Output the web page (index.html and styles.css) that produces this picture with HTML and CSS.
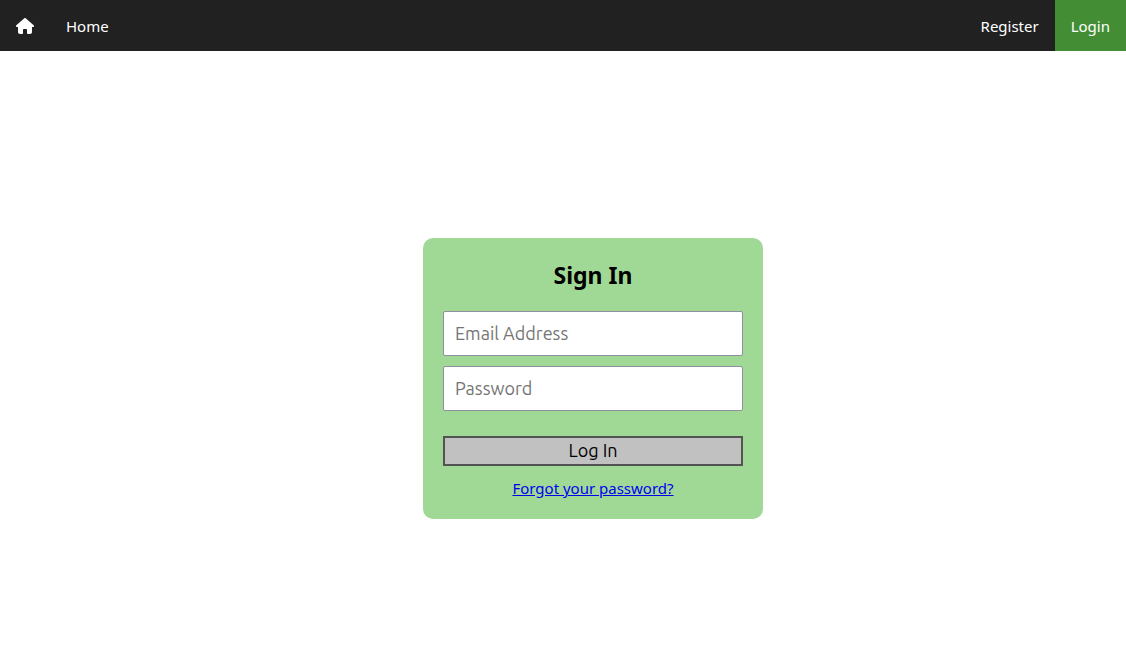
FILE: index.html
```html
<!DOCTYPE html>
<html lang="en">
<head>
<meta charset="utf-8">
<meta name="viewport" content="width=device-width, initial-scale=1">
<title>Sign In</title>
<link rel="stylesheet" href="styles.css">
</head>
<body>
<nav class="navbar">
  <a class="nav-link" href="#" aria-label="Start page"><svg class="home-icon" viewBox="0 0 576 512" aria-hidden="true"><path fill="currentColor" d="M576 256c0 18-15 32-32 32h-32l1 160c0 36-28 64-64 64h-65c-18 0-32-14-32-32v-96c0-18-14-32-32-32h-64c-18 0-32 14-32 32v96c0 18-14 32-32 32h-64c-35 0-64-28-64-64V288H32c-18 0-32-14-32-32 0-9 3-17 10-24L266 8c7-7 15-8 22-8s15 2 21 7l256 225c8 7 12 15 11 24z"/></svg></a>
  <a class="nav-link nav-text" href="#">Home</a>
  <a class="nav-link nav-text nav-end" href="#">Register</a>
  <a class="nav-link nav-text active" href="#" aria-current="page">Login</a>
</nav>
<main class="page">
  <form class="card">
    <h1 class="title">Sign In</h1>
    <input class="field" type="email" placeholder="Email Address" aria-label="Email Address">
    <input class="field" type="password" placeholder="Password" aria-label="Password">
    <button class="submit" type="button">Log In</button>
    <a class="forgot" href="#">Forgot your password?</a>
  </form>
</main>
</body>
</html>
```

FILE: styles.css
```css
* {
  box-sizing: border-box;
}

body {
  display: flex;
  flex-direction: column;
  min-height: 100vh;
  margin: 0;
  background: #fff;
  font: 15px/21px "Segoe UI", "Noto Sans", sans-serif;
}

.navbar {
  display: flex;
  background: #212121;
}

.nav-link {
  display: flex;
  align-items: center;
  padding: 15px 16px;
  color: #fff;
  text-decoration: none;
}

.nav-text {
  padding: 16px 16px 14px;
}

.nav-end {
  margin-left: auto;
}

.active {
  background: #438e34;
}

.home-icon {
  width: 18px;
  height: 16px;
}

.page {
  flex: 1;
  display: flex;
  align-items: center;
  justify-content: center;
  padding: 51px 0 0 60px;
}

.card {
  display: flex;
  flex-direction: column;
  width: 340px;
  padding: 20px;
  border-radius: 10px;
  background: #a0d995;
}

.title {
  margin: 0 0 18px;
  font: bold 23px/35px "Noto Sans", sans-serif;
  text-align: center;
}

.field {
  height: 45px;
  margin-bottom: 10px;
  padding: 0 11px 2px;
  border: 1px solid #8f8f9d;
  border-radius: 2px;
  background: #fff;
  font: 18px Ubuntu, "Noto Sans", sans-serif;
}

.field::placeholder {
  color: #757575;
}

.submit {
  height: 30px;
  margin: 15px 0 12px;
  padding: 0 0 2px;
  border: 2px solid #535353;
  background: #c1c1c1;
  color: #000;
  font: 18px/24px Ubuntu, "Noto Sans", sans-serif;
}

.forgot {
  align-self: center;
  color: #00e;
}
```
